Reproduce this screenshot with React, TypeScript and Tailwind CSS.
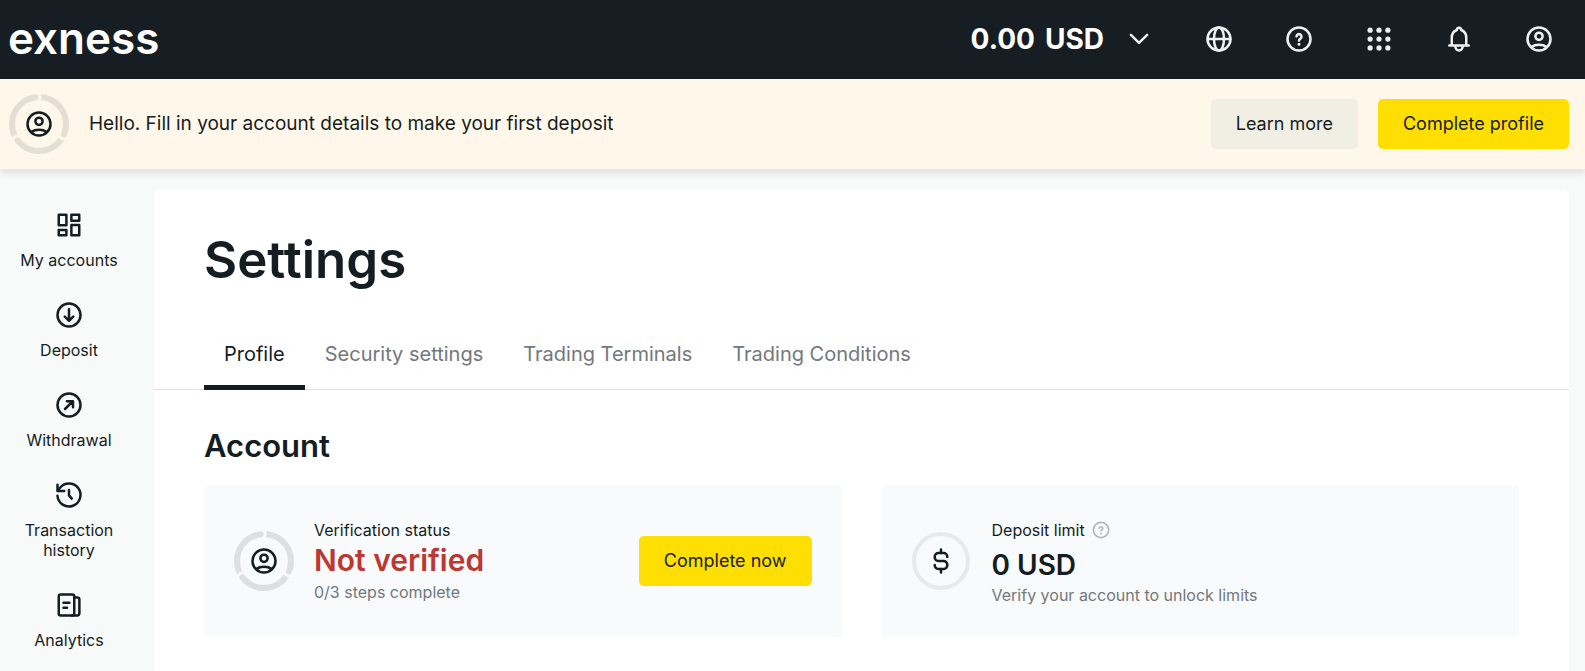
import React, { useState } from 'react';

type IconProps = { className?: string; children: React.ReactNode };

function Icon({ className = 'size-[30px]', children }: IconProps) {
  return (
    <svg
      viewBox="0 0 24 24"
      fill="none"
      stroke="currentColor"
      strokeWidth="2"
      strokeLinecap="round"
      strokeLinejoin="round"
      className={`shrink-0 ${className}`}
      aria-hidden="true"
    >
      {children}
    </svg>
  );
}

function UserIcon() {
  return (
    <Icon>
      <circle cx="12" cy="12" r="9.2" />
      <circle cx="12" cy="9.8" r="2.9" />
      <path d="M6 18.3C7.5 17.2 9.6 16.6 12 16.6s4.5.6 6 1.7" />
    </Icon>
  );
}

function HelpIcon({ className }: { className?: string }) {
  return (
    <Icon className={className}>
      <circle cx="12" cy="12" r="9.2" />
      <path d="M10 9.9a2 2 0 1 1 3.2 1.8c-.8.5-1.2.8-1.2 1.5" />
      <path d="M12 16.2v.1" strokeWidth="2.3" />
    </Icon>
  );
}

// Three step ring; each finished end is round and bites into the next segment
function StepsRing({ ring, gap }: { ring: string; gap: string }) {
  return (
    <div className="grid size-[60px] shrink-0 place-items-center">
      <svg viewBox="0 0 60 60" fill="none" className="col-start-1 row-start-1 size-full" aria-hidden="true">
        <circle cx="30" cy="30" r="27" strokeWidth="6" className={ring} />
        {[0, 120, 240].map((angle) => (
          <g key={angle} transform={`rotate(${angle} 30 30)`} strokeLinecap="round">
            <path d="M24 3.7A27 27 0 0 1 28.6 3" strokeWidth="8" className={gap} />
            <path d="M19.9 5A27 27 0 0 1 26.6 3.2" strokeWidth="6" className={ring} />
          </g>
        ))}
      </svg>
      <div className="col-start-1 row-start-1">
        <UserIcon />
      </div>
    </div>
  );
}

const navItems = [
  {
    label: 'My accounts',
    icon: (
      <Icon>
        <rect x="3.8" y="3.7" width="6.1" height="8.4" />
        <rect x="13.9" y="3.7" width="6.3" height="4.9" />
        <rect x="3.8" y="15.9" width="6.1" height="4.3" />
        <rect x="13.9" y="11.9" width="6.3" height="8.3" />
      </Icon>
    ),
  },
  {
    label: 'Deposit',
    icon: (
      <Icon>
        <circle cx="12" cy="12" r="9.2" />
        <path d="M12 7.4v9M8.6 13.3l3.4 3.3 3.4-3.3" />
      </Icon>
    ),
  },
  {
    label: 'Withdrawal',
    icon: (
      <Icon>
        <circle cx="12" cy="12" r="9.2" />
        <path d="M8.8 15.2l6-6M10.3 8.9h4.9v4.9" />
      </Icon>
    ),
  },
  {
    label: 'Transaction history',
    icon: (
      <Icon>
        <path d="M2.8 12.6A9.2 9.2 0 1 0 4.6 6.5L3.2 8.6" />
        <path d="M2.8 3.8v5h5.4" />
        <path d="M12 8v4.3l2.2 2.6" />
      </Icon>
    ),
  },
  {
    label: 'Analytics',
    icon: (
      <Icon>
        <rect x="3.8" y="3.6" width="12.4" height="16.8" rx="1.6" />
        <path d="M16.4 5.9h2.3a1.6 1.6 0 0 1 1.6 1.6v11.3a1.6 1.6 0 0 1-1.6 1.6h-4.5" />
        <path d="M7.6 10.1h4.7M7.6 14.1h2.8" />
      </Icon>
    ),
  },
];

const tabs = ['Profile', 'Security settings', 'Trading Terminals', 'Trading Conditions'];

const headerActions = [
  {
    label: 'Language',
    icon: (
      <Icon>
        <circle cx="12" cy="12" r="9.2" />
        <ellipse cx="12" cy="12" rx="4" ry="9.2" />
        <path d="M3 12h18" />
      </Icon>
    ),
  },
  { label: 'Help', icon: <HelpIcon /> },
  {
    label: 'Apps',
    icon: (
      <Icon>
        <g fill="currentColor" stroke="none">
          {[4.9, 12, 19.1].map((y) => [4.9, 12, 19.1].map((x) => <circle key={`${x}-${y}`} cx={x} cy={y} r="2.1" />))}
        </g>
      </Icon>
    ),
  },
  {
    label: 'Notifications',
    icon: (
      <Icon>
        <path d="M4.2 17.2h15.6M6.2 17v-6c0-3 1.6-5.3 4.1-6.2 0-1 .7-1.8 1.7-1.8s1.7.8 1.7 1.8c2.5.9 4.1 3.2 4.1 6.2v6" />
        <path d="M9 17.6a3 3.5 0 0 0 6 0" />
      </Icon>
    ),
  },
  { label: 'User menu', icon: <UserIcon /> },
];

function Header() {
  return (
    <header className="flex h-[79px] items-center justify-between bg-[#161e23] pr-[26px] pb-0.5 pl-2 text-white">
      <a href="#" className="pb-0.5 text-[44px] leading-none font-semibold">
        exness
      </a>
      <div className="flex items-center gap-10 text-[#eef1f3]">
        <button type="button" className="flex items-center gap-[15px]">
          <span className="flex gap-2.5 text-[28px] leading-10 font-bold text-white">
            <span>0.00</span>
            <span>USD</span>
          </span>
          <span className="flex w-10 justify-center">
            <Icon>
              <path d="M5.5 8.7l6.5 6.4 6.5-6.4" />
            </Icon>
          </span>
        </button>
        {headerActions.map((action) => (
          <button key={action.label} type="button" aria-label={action.label} className="flex w-10 justify-center">
            {action.icon}
          </button>
        ))}
      </div>
    </header>
  );
}

function Banner() {
  return (
    <section className="relative flex h-[91px] items-center border-b border-[#f3ebc9] bg-[#fff8ea] pr-4 pl-[9px] shadow-[0_2px_8px_rgba(20,29,34,0.14)]">
      <StepsRing ring="stroke-[#e3dfd2]" gap="stroke-[#fff8ea]" />
      <p className="ml-5 flex-1 text-[19px]">Hello. Fill in your account details to make your first deposit</p>
      <div className="flex gap-5 text-lg">
        <button type="button" className="h-[50px] rounded-[5px] bg-[#f1efe4] px-[25px]">
          Learn more
        </button>
        <button type="button" className="h-[50px] rounded-[5px] bg-[#ffde02] px-[25px]">
          Complete profile
        </button>
      </div>
    </section>
  );
}

function Sidebar() {
  return (
    <nav className="w-[138px] shrink-0 pt-10">
      <ul className="flex flex-col gap-[30px]">
        {navItems.map((item) => (
          <li key={item.label}>
            <a href="#" className="flex flex-col items-center gap-2.5 px-4 text-center text-base leading-5">
              {item.icon}
              <span>{item.label}</span>
            </a>
          </li>
        ))}
      </ul>
    </nav>
  );
}

function VerificationCard() {
  return (
    <div className="flex items-center gap-5 rounded-[5px] bg-[#f8fafb] px-[30px] py-8">
      <StepsRing ring="stroke-[#dddfe0]" gap="stroke-[#f8fafb]" />
      <div className="flex-1">
        <p className="text-base leading-5">Verification status</p>
        <p className="text-[30px] leading-10 font-semibold text-[#bc3832]">Not verified</p>
        <p className="mt-0.5 text-base leading-5 text-[#72787b]">0/3 steps complete</p>
      </div>
      <button type="button" className="h-[50px] rounded-[5px] bg-[#ffde02] px-[25px] text-lg">
        Complete now
      </button>
    </div>
  );
}

function DepositLimitCard() {
  return (
    <div className="flex items-center gap-[22px] rounded-[5px] bg-[#f8fafb] px-[30px] py-8">
      <div className="flex size-[58px] shrink-0 items-center justify-center rounded-full border-4 border-[#e8eaea]">
        <Icon>
          <path d="M12 2.8v2.8M12 18.4v2.8" />
          <path d="M17 8.8v-.4a2.8 2.8 0 0 0-2.8-2.8H9.8A2.8 2.8 0 0 0 7 8.4v.8A2.8 2.8 0 0 0 9.8 12h4.4a2.8 2.8 0 0 1 2.8 2.8v.8a2.8 2.8 0 0 1-2.8 2.8H9.8A2.8 2.8 0 0 1 7 15.6v-.4" />
        </Icon>
      </div>
      <div className="pt-0.5">
        <p className="flex items-center gap-1.5 text-base leading-[22px]">
          Deposit limit
          <button type="button" aria-label="About deposit limit" className="text-[#b4b8ba]">
            <HelpIcon className="size-5" />
          </button>
        </p>
        <p className="mt-1 text-[28px] leading-10 font-semibold">0 USD</p>
        <p className="text-base leading-5 text-[#72787b]">Verify your account to unlock limits</p>
      </div>
    </div>
  );
}

export default function App() {
  const [activeTab, setActiveTab] = useState('Profile');

  return (
    <div className="flex min-h-screen flex-col overflow-hidden bg-[#f8f9f9] font-['Inter',sans-serif] text-[#141d22]">
      <Header />
      <Banner />
      <div className="flex flex-1 gap-4 pr-4">
        <Sidebar />
        <main className="mt-5 min-w-0 flex-1 rounded-t-[5px] bg-white">
          <h1 className="px-[50px] pt-10 text-[51px] leading-[60px] font-semibold">Settings</h1>
          <div role="tablist" className="mt-7 flex border-b border-[#dfe1e2] px-[50px]">
            {tabs.map((tab) => (
              <button
                key={tab}
                type="button"
                role="tab"
                aria-selected={tab === activeTab}
                onClick={() => setActiveTab(tab)}
                className={`-mb-px h-[72px] border-y-[5px] border-t-transparent px-5 text-xl ${
                  tab === activeTab ? 'border-b-[#141d22]' : 'border-b-transparent text-[#72787b]'
                }`}
              >
                {tab}
              </button>
            ))}
          </div>
          <section className="px-[50px] pt-9">
            <h2 className="text-[31px] leading-10 font-semibold">Account</h2>
            <div className="mt-[19px] grid grid-cols-2 gap-10">
              <VerificationCard />
              <DepositLimitCard />
            </div>
          </section>
        </main>
      </div>
    </div>
  );
}
